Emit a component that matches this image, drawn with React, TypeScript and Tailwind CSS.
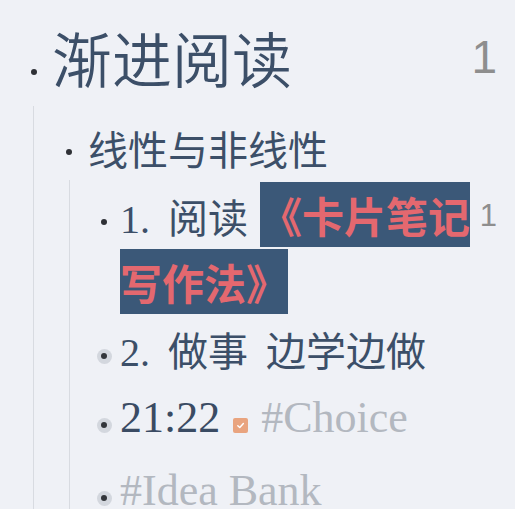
import React from 'react';

const Dot = ({ halo = false }: { halo?: boolean }) =>
  halo ? (
    <span className="flex h-[15px] w-[15px] items-center justify-center rounded-full bg-[#d3d7de]">
      <span className="h-[6px] w-[6px] rounded-full bg-[#33363b]" />
    </span>
  ) : (
    <span className="h-[6px] w-[6px] rounded-full bg-[#2f3136]" />
  );

const Check = () => (
  <span className="mx-[13px] mt-[14px] flex h-[15px] w-[15px] items-center justify-center rounded-[2px] bg-[#e9a47f]">
    <svg width="9" height="9" viewBox="0 0 10 10" fill="none">
      <path d="M2 5.2 4.2 7.3 8.2 2.8" stroke="#fff" strokeWidth="1.6" strokeLinecap="round" strokeLinejoin="round" />
    </svg>
  </span>
);

export default function App() {
  return (
    <div className="h-[509px] w-full overflow-hidden bg-[#eff1f6] pl-[24px] pr-[18px] pt-[19px] font-['Liberation_Serif','Noto_Sans_CJK_SC',serif] text-[#3c4f68]">
      {/* top level */}
      <div className="flex h-[76px] items-center">
        <div className="flex w-[20px] justify-center pt-[30px]">
          <Dot />
        </div>
        <div className="ml-[8px] font-['Noto_Sans_CJK_SC',sans-serif] text-[60px] font-[350] leading-none">渐进阅读</div>
        <div className="ml-auto font-['Liberation_Sans',sans-serif] text-[46px] leading-none text-[#8e8e8e]">1</div>
      </div>

      <div className="ml-[9px] mt-[11px] border-l border-[#d8dbe1] pl-[25px] pt-[12px]">
        <div className="flex h-[60px] items-center">
          <div className="flex w-[20px] justify-center pt-[8px]">
            <Dot />
          </div>
          <div className="ml-[9px] font-['Noto_Sans_CJK_SC',sans-serif] text-[40px] leading-none">线性与非线性</div>
        </div>

        <div className="ml-[10px] mt-[2px] border-l border-[#d8dbe1] pb-[20px] pl-[24px] pt-[4px]">
          {/* item 1 */}
          <div className="flex items-start">
            <div className="flex h-[62px] w-[20px] items-center justify-center pt-[14px]">
              <Dot />
            </div>
            <div className="ml-[6px] w-[358px] text-[40px] leading-[62px]">
              1.<span className="inline-block w-[18px]" />阅读<span className="inline-block w-[12px]" />
              <span className="bg-[#3b5878] py-[2px] font-['Noto_Sans_CJK_SC',sans-serif] text-[42px] font-bold text-[#e4686f] [box-decoration-break:clone]">
                《卡片笔记写作法》
              </span>
            </div>
            <div className="ml-auto flex h-[62px] items-center pt-[2px] font-['Liberation_Sans',sans-serif] text-[31px] text-[#8e8e8e]">
              1
            </div>
          </div>

          {/* item 2 */}
          <div className="mt-[5px] flex h-[60px] items-center">
            <div className="flex w-[20px] justify-center pt-[6px]">
              <Dot halo />
            </div>
            <div className="ml-[6px] text-[40px] leading-none [word-spacing:8px]">2. 做事 边学边做</div>
          </div>

          {/* item 3 */}
          <div className="mt-[5px] flex h-[60px] items-center">
            <div className="flex w-[20px] justify-center pt-[14px]">
              <Dot halo />
            </div>
            <div className="ml-[6px] text-[44px] leading-none text-[#3a4b63]">21:22</div>
            <Check />
            <div className="text-[44px] leading-none text-[#b3b8c0]">#Choice</div>
          </div>

          {/* item 4 */}
          <div className="mt-[13px] flex h-[60px] items-center">
            <div className="flex w-[20px] justify-center pt-[14px]">
              <Dot halo />
            </div>
            <div className="ml-[6px] text-[44px] leading-none text-[#b3b8c0]">#Idea Bank</div>
          </div>
        </div>
      </div>
    </div>
  );
}
